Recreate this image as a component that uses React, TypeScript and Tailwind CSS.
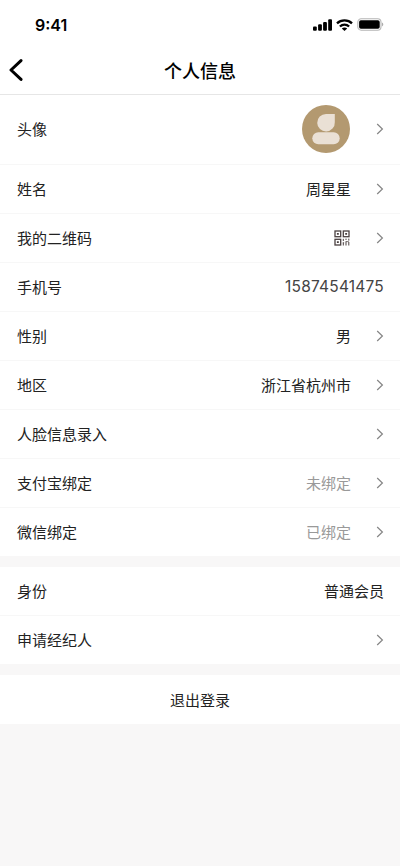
import type { ReactNode } from 'react'
import clsx from 'clsx'

interface RowProps {
  label: string
  children?: ReactNode
  arrow?: boolean
  last?: boolean
  tall?: boolean
}

function Chevron() {
  return (
    <svg width="8" height="12" viewBox="0 0 8 12" fill="none" className="ml-[25px] shrink-0">
      <path d="M1.2 1L6.4 6L1.2 11" stroke="#858585" strokeWidth="1.2" />
    </svg>
  )
}

function Row({ label, children, arrow = true, last, tall }: RowProps) {
  return (
    <div
      className={clsx(
        'flex items-center bg-white pl-[17px] pr-4 text-[15px] text-[#222222]',
        tall ? 'h-[70px] pb-px' : last ? 'h-12' : 'h-[49px]',
        !last && 'border-b border-[#f7f7f7]'
      )}
    >
      <span className="flex-1">{label}</span>
      {children}
      {arrow && <Chevron />}
    </div>
  )
}

function StatusBar() {
  return (
    <div className="flex h-[49px] items-center justify-between pl-[35px] pr-4">
      <span className="font-['Inter'] text-[16px] font-semibold">9:41</span>
      <div className="flex items-center">
        <svg width="19" height="12" viewBox="0 0 19 12" fill="#000">
          <rect x="0" y="7.4" width="3.8" height="4.4" rx="1" />
          <rect x="5.1" y="5.3" width="3.8" height="6.5" rx="1" />
          <rect x="10.1" y="3" width="3.8" height="8.8" rx="1" />
          <rect x="15.2" y="0.3" width="3.8" height="11.5" rx="1" />
        </svg>
        <svg width="17" height="12" viewBox="0 0 17 12" fill="none" stroke="#000" strokeWidth="2.3" className="ml-[4px]">
          <path d="M1 4.4C5.1 0.4 11.9 0.4 16 4.4" />
          <path d="M3.9 7.5C6.5 5 10.5 5 13.1 7.5" />
          <path d="M8.5 12L5.8 9.5C7.2 8.2 9.8 8.2 11.2 9.5Z" fill="#000" stroke="none" />
        </svg>
        <svg width="27" height="13" viewBox="0 0 27 13" fill="none" className="ml-[4px]">
          <rect x="0.8" y="0.8" width="23.2" height="11.4" rx="3.4" stroke="#b5b5b5" strokeWidth="1.1" />
          <rect x="2.1" y="2.2" width="20.6" height="8.6" rx="1.8" fill="#000" />
          <path d="M25.2 4.6C26.6 5.2 26.6 7.8 25.2 8.4Z" fill="#9a9a9a" />
        </svg>
      </div>
    </div>
  )
}

function Avatar() {
  return (
    <svg width="48" height="48" viewBox="0 0 48 48" className="mr-px">
      <circle cx="24" cy="24" r="24" fill="#b39970" />
      <path d="M24 8.9H32.8V17.2A8.8 8.8 0 1 1 24 8.9Z" fill="#eae0d5" />
      <rect x="10.3" y="27.2" width="27.4" height="12.1" rx="6" fill="#eae0d5" />
    </svg>
  )
}

function QrIcon() {
  return (
    <svg width="16" height="16" viewBox="0 0 16 16" fill="none" stroke="#4a4040" strokeWidth="1.3" className="mr-px">
      <rect x="1" y="1" width="5.7" height="5.7" />
      <rect x="9.3" y="1" width="5.7" height="5.7" />
      <rect x="1" y="9.3" width="5.7" height="5.7" />
      <path d="M2.9 3.85H4.8M11.2 3.85H13.1M2.9 12.15H4.8" strokeWidth="1.9" />
      <path d="M9.3 8.8V11M9.3 12.5V15.5M12 8.6V10M12 11.3V15.5M14.8 8.6V10.6M14.8 12V15.5" strokeWidth="1" />
      <path d="M12 11.6H14.8M8.8 12.8H10.2" strokeWidth="0.7" />
    </svg>
  )
}

export default function App() {
  return (
    <div className="min-h-screen w-full bg-[#f8f7f7] font-['Noto_Sans_CJK_SC',sans-serif] text-black">
      <div className="h-[95px] border-b border-[#e6e6e6] bg-white">
        <StatusBar />
        <div className="grid h-[43px] grid-cols-[40px_1fr_40px] items-center">
          <svg width="14" height="24" viewBox="0 0 14 24" fill="none" className="mb-[2px] ml-[9px]">
            <path d="M12 2.6L2 12L12 21.4" stroke="#000" strokeWidth="3" strokeLinecap="round" strokeLinejoin="round" />
          </svg>
          <h1 className="text-center text-[18px] font-medium">个人信息</h1>
        </div>
      </div>

      <Row label="头像" tall>
        <Avatar />
      </Row>
      <Row label="姓名">周星星</Row>
      <Row label="我的二维码">
        <QrIcon />
      </Row>
      <Row label="手机号" arrow={false}>
        <span className="font-['Inter'] text-[15.5px] tracking-[0.2px] text-[#444444]">15874541475</span>
      </Row>
      <Row label="性别">男</Row>
      <Row label="地区">浙江省杭州市</Row>
      <Row label="人脸信息录入" />
      <Row label="支付宝绑定">
        <span className="text-[#999999]">未绑定</span>
      </Row>
      <Row label="微信绑定" last>
        <span className="text-[#999999]">已绑定</span>
      </Row>

      <div className="mt-[11px]">
        <Row label="身份" arrow={false}>普通会员</Row>
        <Row label="申请经纪人" last />
      </div>

      <button className="mt-[11px] flex h-[49px] w-full items-center justify-center bg-white pt-px text-[15px] text-[#222222]">
        退出登录
      </button>
    </div>
  )
}
